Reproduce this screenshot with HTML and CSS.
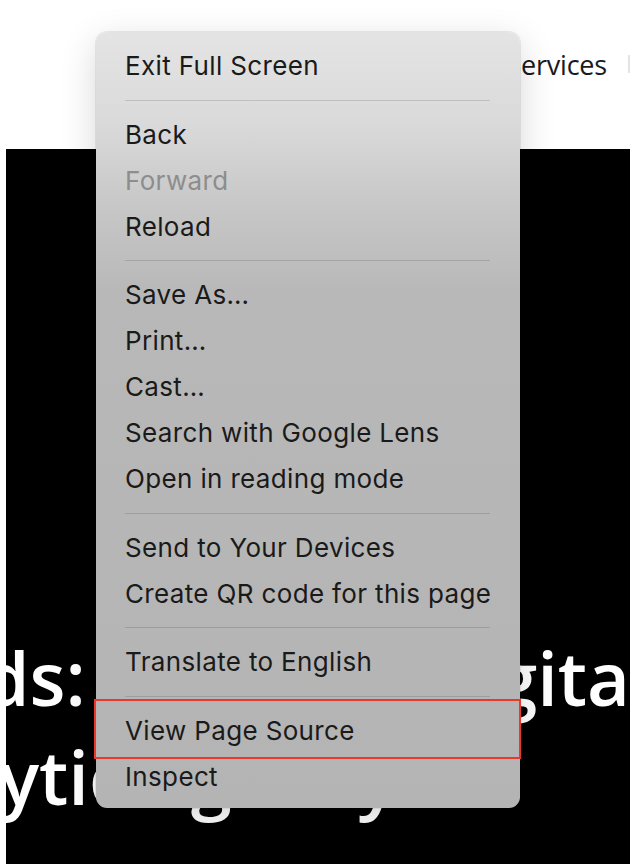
FILE: index.html
```html
<!DOCTYPE html>
<html lang="en">
<head>
<meta charset="utf-8">
<title>Context menu</title>
<link rel="stylesheet" href="styles.css">
</head>
<body>
<header class="site-header">
  <nav class="nav">
    <a class="nav-link">Home</a>
    <a class="nav-link">Insights</a>
    <a class="nav-link">Services</a>
    <span class="nav-cta">Contact</span>
  </nav>
</header>
<section class="hero">
  <h1 class="hero-title">
    <span class="line line1"><span class="w">Trends:</span><span class="w">Why</span><span class="w w-digital">Digital</span></span>
    <span class="line line2"><span class="w">Analytics</span><span class="w w-agency">Agency</span></span>
  </h1>
</section>

<div class="context-menu" role="menu">
  <div class="item">Exit Full Screen</div>
  <div class="sep"></div>
  <div class="item">Back</div>
  <div class="item disabled">Forward</div>
  <div class="item">Reload</div>
  <div class="sep"></div>
  <div class="item">Save As…</div>
  <div class="item">Print…</div>
  <div class="item">Cast…</div>
  <div class="item">Search with Google Lens</div>
  <div class="item">Open in reading mode</div>
  <div class="sep"></div>
  <div class="item">Send to Your Devices</div>
  <div class="item">Create QR code for this page</div>
  <div class="sep"></div>
  <div class="item">Translate to English</div>
  <div class="sep"></div>
  <div class="item highlighted">View Page Source<span class="annot"></span></div>
  <div class="item">Inspect</div>
</div>
</body>
</html>
```

FILE: styles.css
```css
html, body {
  margin: 0;
  padding: 0;
  background: #ffffff;
  overflow: hidden;
  width: 630px;
  height: 864px;
}

body {
  position: relative;
  font-family: "Open Sans", "Liberation Sans", sans-serif;
}

.site-header {
  height: 149px;
  display: flex;
  justify-content: flex-end;
  overflow: hidden;
}

.nav {
  display: flex;
  align-items: center;
  gap: 28px;
  height: 128px;
  margin-right: -22px;
  white-space: nowrap;
}

.nav-link {
  font-size: 27px;
  color: #1a1a1a;
  letter-spacing: -0.2px;
}

.nav-cta {
  display: inline-block;
  width: 22px;
  height: 18px;
  overflow: hidden;
  color: transparent;
  border-left: 2px solid #e4e4e4;
  margin-left: -7px;
}

.hero {
  margin-left: 6px;
  height: 715px;
  background: #000000;
  overflow: hidden;
  box-sizing: border-box;
  padding-top: 479px;
}

.hero-title {
  margin: 0;
  color: #ffffff;
  font-family: "Open Sans", "Noto Sans", sans-serif;
  font-weight: 600;
  font-size: 74px;
  line-height: 99px;
  white-space: nowrap;
}

.line {
  display: flex;
  gap: 20px;
}

.line1 {
  margin-left: -186px;
}

.line2 {
  margin-left: -166px;
}

.w-digital {
  margin-left: 139px;
}

.w-agency {
  margin-left: -40px;
}

.context-menu {
  position: absolute;
  left: 96px;
  top: 32px;
  width: 424px;
  height: 776px;
  box-sizing: border-box;
  padding: 11px 30px 6px 29px;
  border-radius: 11px;
  background: linear-gradient(180deg, #e4e4e4 0px, #dadada 90px, #c8c8c8 170px, #b8b8b8 260px, #b4b4b4 776px);
  box-shadow: 0 0 0 1px rgba(0, 0, 0, 0.07), 0 10px 36px rgba(0, 0, 0, 0.16);
  font-family: "Inter", "Liberation Sans", sans-serif;
  font-size: 26px;
  letter-spacing: 0.35px;
  color: #1a1a1a;
}

.item {
  position: relative;
  height: 46px;
  line-height: 46px;
  white-space: nowrap;
}

.item.disabled {
  color: #8d8d8d;
}

.sep {
  height: 22.5px;
  display: flex;
  align-items: center;
}

.sep::before {
  content: "";
  display: block;
  width: 100%;
  height: 1px;
  background: rgba(0, 0, 0, 0.13);
}

.annot {
  position: absolute;
  left: -31px;
  right: -31px;
  top: -9px;
  bottom: -5px;
  border: 2px solid #e8392c;
  pointer-events: none;
}
```
